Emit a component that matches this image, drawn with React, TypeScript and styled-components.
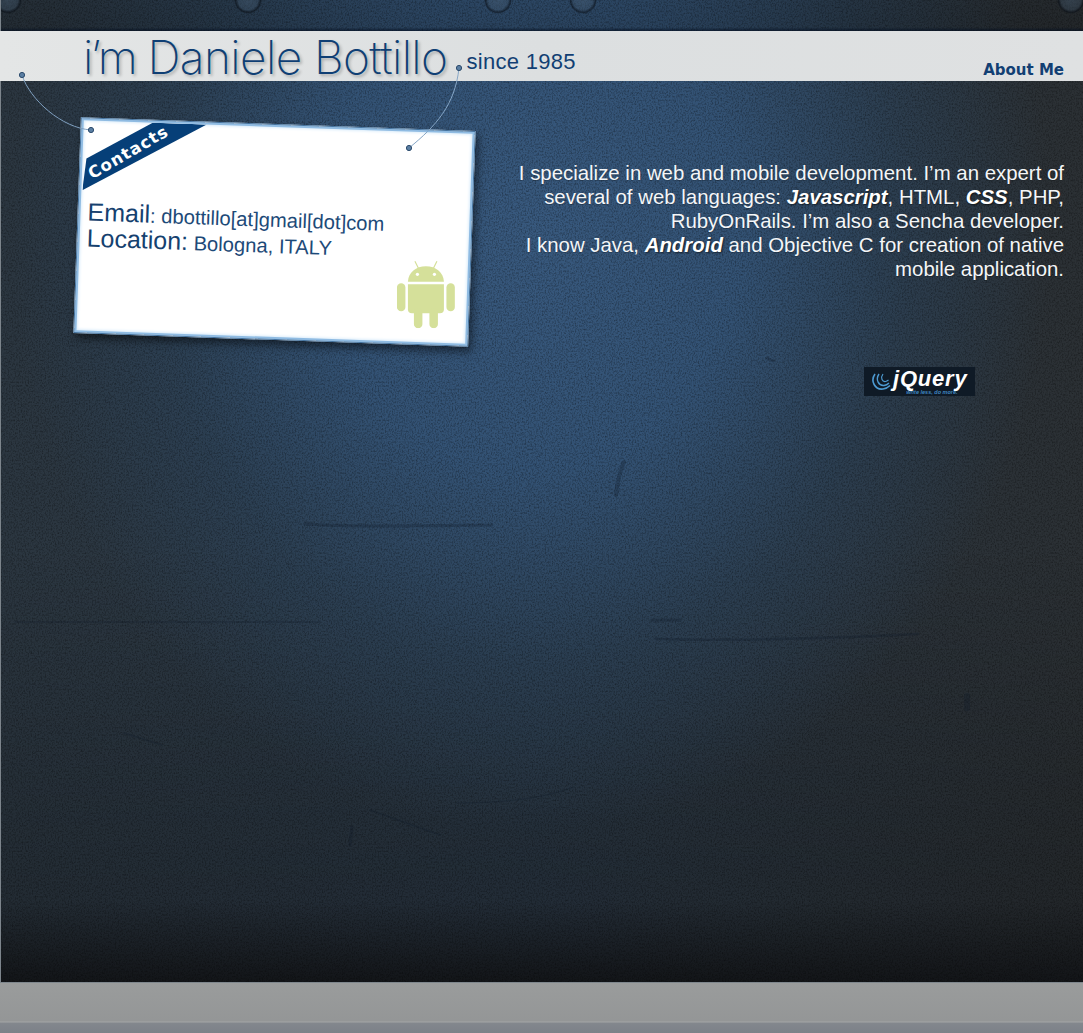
import * as React from 'react'
import styled, { createGlobalStyle } from 'styled-components'

const GlobalStyle = createGlobalStyle`
  html, body {
    margin: 0;
    padding: 0;
    background: #16191c;
  }
`

const grain = "url(\"data:image/svg+xml,%3Csvg xmlns='http://www.w3.org/2000/svg' width='1083' height='1033'%3E%3Cfilter id='n' x='0' y='0' width='100%25' height='100%25'%3E%3CfeTurbulence type='fractalNoise' baseFrequency='.7 .55' numOctaves='4' seed='7'/%3E%3CfeColorMatrix values='0 0 0 0 0 0 0 0 0 0 0 0 0 0 0 0 0 0 .7 -.28'/%3E%3C/filter%3E%3Crect width='1083' height='1033' filter='url(%23n)'/%3E%3C/svg%3E\")"

const rivet = 'radial-gradient(circle at 50% 46%, rgba(74,96,118,.45) 0, rgba(66,88,110,.35) 10px, rgba(10,16,24,.6) 12.5px, rgba(10,16,24,0) 14px)'

const Page = styled.div`
  position: relative;
  width: 1083px;
  height: 1033px;
  overflow: hidden;
  display: flex;
  flex-direction: column;
  font-family: "Liberation Sans", Arial, sans-serif;
`

const Wall = styled.div`
  flex: 1;
  display: flex;
  flex-direction: column;
  border-left: 1px solid #7d858c;
  background-color: #1a1d20;
  background-image:
    ${grain},
    linear-gradient(180deg, rgba(18,20,23,0) 0, rgba(18,20,23,0) 900px, rgba(18,20,23,.95) 982px),
    radial-gradient(ellipse 520px 600px at 530px 230px, #38597e 0, #335274 40%, rgba(44,68,92,.6) 72%, rgba(40,56,72,0) 100%),
    linear-gradient(180deg, rgba(0,0,0,0) 55%, rgba(0,0,0,.2) 90%),
    linear-gradient(90deg, #2b3640 0, #2a3744 50%, #2b3034 100%);
`

const TopStrip = styled.div`
  height: 31px;
  flex: none;
  background-image:
    ${rivet}, ${rivet}, ${rivet}, ${rivet}, ${rivet},
    linear-gradient(180deg, rgba(0,0,0,.15) 0, rgba(0,0,0,.2) 88%, rgba(4,14,30,.75) 100%);
  background-repeat: no-repeat;
  background-size: 28px 28px, 28px 28px, 28px 28px, 28px 28px, 28px 28px, 100% 100%;
  background-position: -7px -13px, 233px -13px, 483px -13px, 568px -13px, 1056px -13px, 0 0;
`

const Header = styled.header`
  height: 50px;
  flex: none;
  margin-left: -1px;
  display: flex;
  align-items: flex-end;
  padding: 0 19px 0 83px;
  box-sizing: border-box;
  background: linear-gradient(90deg, #e4e6e6 0, #dcdfe0 50%, #dfe1e2 100%);
`

const Title = styled.h1`
  margin: 0 0 -2px;
  font-family: Inter, "Liberation Sans", sans-serif;
  font-weight: 200;
  font-size: 46px;
  line-height: 52px;
  letter-spacing: -.6px;
  color: #0f3f74;
  text-shadow: 2px 2px 3px rgba(0, 0, 0, .25);
`

const TitleLead = styled.span`
  letter-spacing: -2.500px;
`

const Since = styled.span`
  margin: 0 0 6px 19px;
  font-size: 22px;
  line-height: 26px;
  letter-spacing: .3px;
  color: #123f73;
`

const NavLink = styled.a`
  margin: 0 0 2px auto;
  font-family: "DejaVu Sans", sans-serif;
  font-weight: 700;
  font-size: 15px;
  line-height: 18px;
  color: #123f73;
`

const Main = styled.main`
  flex: 1;
  display: flex;
  justify-content: space-between;
  align-items: flex-start;
  padding: 43px 19px 0 76px;
`

const Card = styled.section`
  position: relative;
  width: 395px;
  height: 216px;
  box-sizing: border-box;
  display: flex;
  flex-direction: column;
  padding: 81px 14px 0 9px;
  background: #fff;
  border: 1px solid #44739f;
  box-shadow:
    inset 0 0 0 2px #8fbbe2,
    inset 0 0 3px 3px #d8ebfa,
    3px 5px 8px rgba(0, 0, 0, .5);
  transform: rotate(2deg);
`

const Ribbon = styled.div`
  position: absolute;
  top: 2px;
  left: 3px;
  width: 124px;
  height: 70px;
  overflow: hidden;
  background: #063f78;
  clip-path: polygon(0 100%, 3px 38px, 68px 0, 122px 0);
`

const RibbonLabel = styled.span`
  position: absolute;
  top: 21px;
  left: 0;
  font-family: "DejaVu Sans", sans-serif;
  font-weight: 700;
  font-size: 16.500px;
  line-height: 20px;
  letter-spacing: 1px;
  color: #fff;
  transform: rotate(-32deg);
`

const InfoLine = styled.p`
  margin: 0;
  line-height: 24px;
  white-space: nowrap;
  color: #1d4a78;
  font-size: 20.200px;
`

const InfoLabel = styled.span`
  font-size: 25px;
  color: #15416f;
`

const AndroidMark = styled.svg`
  flex: none;
  margin-top: -3px;
  align-self: flex-end;
  transform: rotate(-2deg);
`

const Side = styled.div`
  width: 560px;
  display: flex;
  flex-direction: column;
`

const Bio = styled.p`
  margin: 37px 0 0;
  text-align: right;
  font-size: 20.400px;
  line-height: 24px;
  color: #f4f6f8;
  text-shadow: 0 1px 1px rgba(0, 0, 0, .25);
`

const Tech = styled.em`
  font-weight: 700;
  font-style: italic;
  color: #fff;
  text-shadow: 1px 1px 2px rgba(0, 0, 0, .6);
`

const JQueryBadge = styled.div`
  align-self: flex-end;
  width: 111px;
  height: 29px;
  margin: 86px 89px 0 0;
  display: flex;
  align-items: center;
  gap: 2px;
  padding-left: 7px;
  box-sizing: border-box;
  background: #0f1a26;
`

const JQueryWords = styled.div`
  display: flex;
  flex-direction: column;
  align-items: flex-end;
`

const JQueryName = styled.span`
  font-size: 22px;
  line-height: 21px;
  font-weight: 700;
  font-style: italic;
  letter-spacing: .8px;
  color: #fff;
`

const JQueryTag = styled.span`
  margin-right: 10px;
  font-size: 5.500px;
  line-height: 6px;
  font-weight: 700;
  font-style: italic;
  color: #3f86c0;
`

const Footer = styled.footer`
  height: 51px;
  flex: none;
  border-top: 1px solid #7f878d;
  box-sizing: border-box;
  background:
    linear-gradient(180deg, rgba(0,0,0,0) 0, rgba(0,0,0,0) 76%, rgba(180,182,182,.5) 78%, #83878d 80%, #7c8188 100%),
    linear-gradient(180deg, #9a9c9c 0, #929495 100%);
`

const Overlay = styled.svg`
  position: absolute;
  top: 0;
  left: 0;
  pointer-events: none;
`

const pins = [
  [22, 75],
  [459, 68],
  [91, 130],
  [409, 148],
]

// scratches and stains on the metal
const scratches = [
  { d: 'M305 524C350 527 400 526 492 525', w: 3 },
  { d: 'M624 462C620 472 617 482 616 495', w: 4 },
  { d: 'M656 639C720 641 790 640 918 634', w: 2.500 },
  { d: 'M652 620L680 620', w: 3 },
  { d: 'M352 827L350 845', w: 3 },
  { d: 'M124 733L162 745', w: 1.500 },
  { d: 'M456 803C490 803 540 800 573 787', w: 1.200 },
  { d: 'M370 810L440 835', w: 1.500 },
  { d: 'M967 696L967 708', w: 6 },
  { d: 'M767 358L773 361', w: 3 },
  { d: 'M15 622L320 622', w: 1.500 },
]

export default function App() {
  return (
    <Page>
      <GlobalStyle />
      <Wall>
        <TopStrip />
        <Header>
          <Title><TitleLead>i’m</TitleLead> Daniele Bottillo</Title>
          <Since>since 1985</Since>
          <NavLink>About Me</NavLink>
        </Header>
        <Main>
          <Card>
            <Ribbon>
              <RibbonLabel>Contacts</RibbonLabel>
            </Ribbon>
            <InfoLine>
              <InfoLabel>Email</InfoLabel>: dbottillo[at]gmail[dot]com
            </InfoLine>
            <InfoLine>
              <InfoLabel>Location:</InfoLabel> Bologna, ITALY
            </InfoLine>
            <AndroidMark width="58" height="68" viewBox="0 0 58 68">
              <g fill="#d5e09a">
                <path d="M11 21.500C11.500 12 19 6 29 6s17.500 6 18 15.500z" />
                <path d="M11 24h36v25a4 4 0 0 1-4 4H15a4 4 0 0 1-4-4z" />
                <rect x="0" y="23" width="8.500" height="28" rx="4.250" />
                <rect x="49.500" y="23" width="8.500" height="28" rx="4.250" />
                <rect x="17" y="48" width="8.500" height="20" rx="4.250" />
                <rect x="32.500" y="48" width="8.500" height="20" rx="4.250" />
              </g>
              <path d="M18 1l3.500 7M40 1l-3.500 7" stroke="#d5e09a" strokeWidth="1.200" />
              <circle cx="20.500" cy="14" r="1.600" fill="#fff" />
              <circle cx="37.500" cy="14" r="1.600" fill="#fff" />
            </AndroidMark>
          </Card>
          <Side>
            <Bio>
              I specialize in web and mobile development. I’m an expert of<br />
              several of web languages: <Tech>Javascript</Tech>, HTML, <Tech>CSS</Tech>, PHP,<br />
              RubyOnRails. I’m also a Sencha developer.<br />
              I know Java, <Tech>Android</Tech> and Objective C for creation of native<br />
              mobile application.
            </Bio>
            <JQueryBadge>
              <svg width="20" height="19" viewBox="0 0 20 19" fill="none" stroke="#4d9ad2">
                <path d="M4 2C-1 9 4 18 12 17c3-.3 5-1.500 7-3.500" strokeWidth="1.600" />
                <path d="M8 2C4 8 8 14 13 13.500c2-.2 3.500-1 5-2.500" strokeWidth="1.400" />
                <path d="M12 2c-3 4-.5 8 2.500 7.500 1-.2 2-.8 3-1.500" strokeWidth="1.200" />
              </svg>
              <JQueryWords>
                <JQueryName>jQuery</JQueryName>
                <JQueryTag>write less, do more.</JQueryTag>
              </JQueryWords>
            </JQueryBadge>
          </Side>
        </Main>
      </Wall>
      <Footer />
      <Overlay width="1083" height="1033" viewBox="0 0 1083 1033" fill="none">
        <g stroke="#0f1a26" strokeOpacity=".28" strokeLinecap="round">
          {scratches.map(s => (
            <path key={s.d} d={s.d} strokeWidth={s.w} />
          ))}
        </g>
        <path d="M22 75C30 100 62 128 91 130" stroke="#7f9fbf" strokeWidth="1" />
        <path d="M459 68C455 105 436 126 409 148" stroke="#86a6c6" strokeWidth="1" />
        {pins.map(([cx, cy]) => (
          <circle key={`${cx}-${cy}`} cx={cx} cy={cy} r="2.600" fill="#5b7fa3" stroke="#2b4a6c" strokeWidth="1" />
        ))}
      </Overlay>
    </Page>
  )
}
